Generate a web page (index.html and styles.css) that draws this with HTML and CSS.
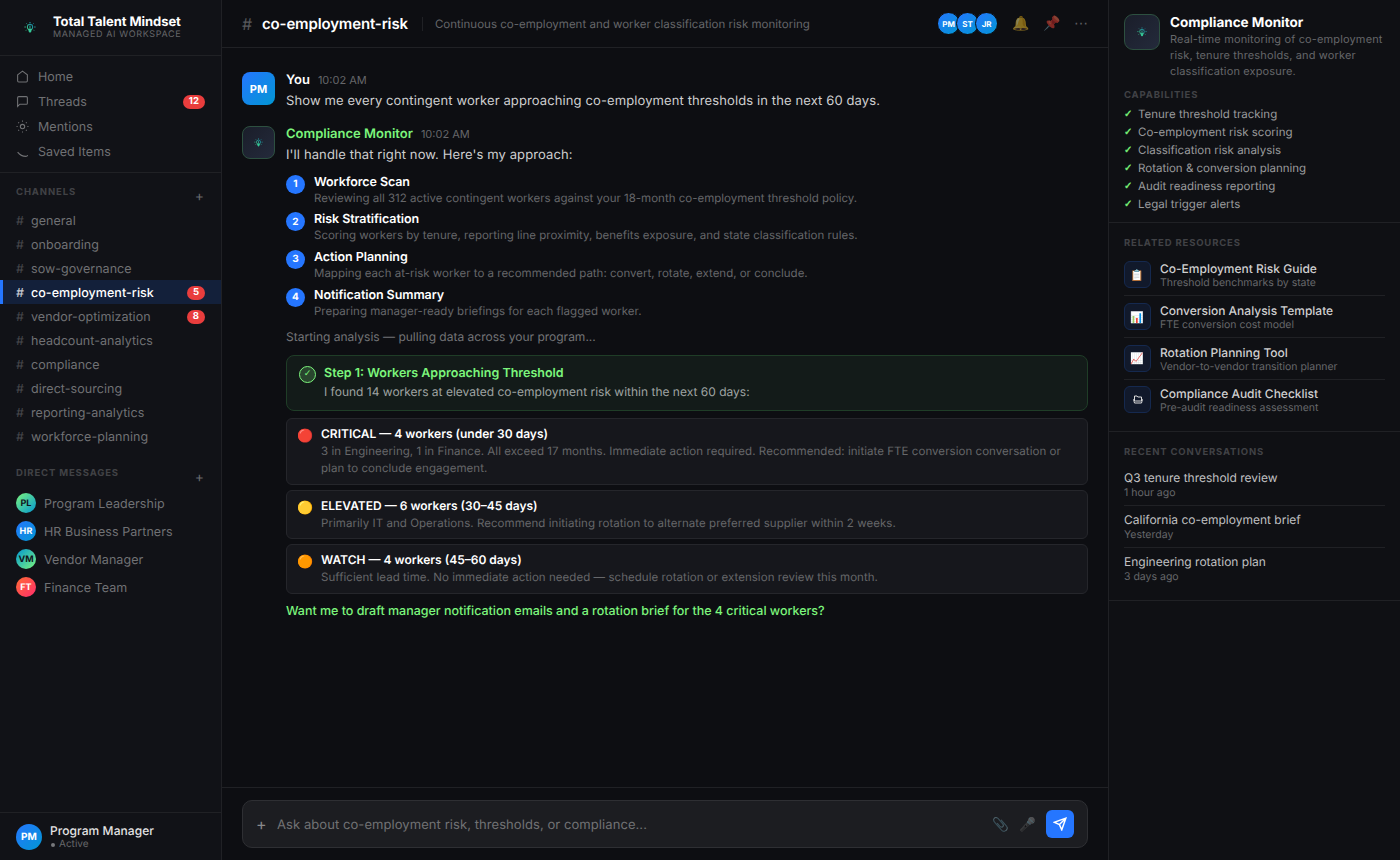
FILE: index.html
```html
<!DOCTYPE html>
<html lang="en">

<head>
    <meta charset="UTF-8">
    <meta name="viewport" content="width=device-width, initial-scale=1.0">
    <title>Total Talent Mindset</title>
    <link rel="stylesheet" href="styles.css">
</head>

<body>
    <svg width="0" height="0" class="defs">
        <defs>
            <linearGradient id="bulbGrad" x1="0" y1="1" x2="1" y2="0">
                <stop offset="0" stop-color="#3fd48a" />
                <stop offset="1" stop-color="#1591b4" />
            </linearGradient>
            <symbol id="bulb" viewBox="0 0 24 24">
                <g fill="none" stroke="url(#bulbGrad)" stroke-width="2">
                    <circle cx="12" cy="11" r="5.5" />
                    <path d="M12 1v2.5M5 4l1.5 1.5M19 4l-1.5 1.5M1 11h2.500M20.500 11H23M4 18l1.500-1.500M20 18l-1.500-1.500M12 8v7" />
                </g>
                <path d="M8 15h8l-1.500 5-2.500 3-2.500-3z" fill="#35c797" />
            </symbol>
        </defs>
    </svg>

    <div class="app">
        <aside class="sidebar">
            <div class="brand">
                <div class="brand-logo"><svg width="12" height="13"><use href="#bulb" /></svg></div>
                <div>
                    <div class="brand-name">Total Talent Mindset</div>
                    <div class="brand-sub">MANAGED AI WORKSPACE</div>
                </div>
            </div>

            <nav class="nav">
                <div class="nav-item">
                    <svg class="nav-icon" viewBox="0 0 24 24"><path d="M3 9l9-7 9 7v11a2 2 0 0 1-2 2H5a2 2 0 0 1-2-2z" /></svg>
                    <span>Home</span>
                </div>
                <div class="nav-item">
                    <svg class="nav-icon" viewBox="0 0 24 24"><path d="M21 15a2 2 0 0 1-2 2H7l-4 4V5a2 2 0 0 1 2-2h14a2 2 0 0 1 2 2z" /></svg>
                    <span>Threads</span>
                    <span class="badge">12</span>
                </div>
                <div class="nav-item">
                    <svg class="nav-icon" viewBox="0 0 24 24"><circle cx="12" cy="12" r="4" /><path d="M12 1v2M12 21v2M1 12h2M21 12h2M4.200 4.200l1.500 1.500M18.300 18.300l1.500 1.500M4.200 19.800l1.500-1.500M18.300 5.700l1.500-1.500" /></svg>
                    <span>Mentions</span>
                </div>
                <div class="nav-item">
                    <svg class="nav-icon" viewBox="0 0 24 24"><path d="M3 13c4 5 10 8 15 8 2 0 3-.5 3.500-2.500" /></svg>
                    <span>Saved Items</span>
                </div>
            </nav>

            <div class="section-head">
                <span>CHANNELS</span>
                <span class="add">+</span>
            </div>
            <div class="channels">
                <div class="channel"><span class="hash">#</span>general</div>
                <div class="channel"><span class="hash">#</span>onboarding</div>
                <div class="channel"><span class="hash">#</span>sow-governance</div>
                <div class="channel active"><span class="hash">#</span>co-employment-risk<span class="badge">5</span></div>
                <div class="channel"><span class="hash">#</span>vendor-optimization<span class="badge">8</span></div>
                <div class="channel"><span class="hash">#</span>headcount-analytics</div>
                <div class="channel"><span class="hash">#</span>compliance</div>
                <div class="channel"><span class="hash">#</span>direct-sourcing</div>
                <div class="channel"><span class="hash">#</span>reporting-analytics</div>
                <div class="channel"><span class="hash">#</span>workforce-planning</div>
            </div>

            <div class="section-head dm-head">
                <span>DIRECT MESSAGES</span>
                <span class="add">+</span>
            </div>
            <div class="dms">
                <div class="dm"><span class="dm-avatar green">PL</span>Program Leadership</div>
                <div class="dm"><span class="dm-avatar blue">HR</span>HR Business Partners</div>
                <div class="dm"><span class="dm-avatar teal">VM</span>Vendor Manager</div>
                <div class="dm"><span class="dm-avatar red">FT</span>Finance Team</div>
            </div>

            <div class="user">
                <div class="user-avatar">PM</div>
                <div>
                    <div class="user-name">Program Manager</div>
                    <div class="user-status"><span class="status-dot"></span>Active</div>
                </div>
            </div>
        </aside>

        <main class="main">
            <header class="topbar">
                <span class="topbar-hash">#</span>
                <h1 class="topbar-title">co-employment-risk</h1>
                <span class="topbar-desc">Continuous co-employment and worker classification risk monitoring</span>
                <div class="members">
                    <span class="member">PM</span>
                    <span class="member">ST</span>
                    <span class="member">JR</span>
                </div>
                <div class="actions">
                    <span>🔔</span>
                    <span>📌</span>
                    <span class="more">⋯</span>
                </div>
            </header>

            <div class="messages">
                <div class="message">
                    <div class="avatar user-bg">PM</div>
                    <div class="message-body">
                        <div class="message-head"><span class="author">You</span><span class="time">10:02 AM</span></div>
                        <div class="message-text">Show me every contingent worker approaching co-employment thresholds in the next 60 days.</div>
                    </div>
                </div>

                <div class="message">
                    <div class="avatar bot-bg"><svg width="9" height="9"><use href="#bulb" /></svg></div>
                    <div class="message-body">
                        <div class="message-head"><span class="author bot">Compliance Monitor</span><span class="time">10:02 AM</span></div>
                        <div class="message-text">I'll handle that right now. Here's my approach:</div>

                        <div class="steps">
                            <div class="step">
                                <span class="step-num">1</span>
                                <div>
                                    <div class="step-title">Workforce Scan</div>
                                    <div class="step-desc">Reviewing all 312 active contingent workers against your 18-month co-employment threshold policy.</div>
                                </div>
                            </div>
                            <div class="step">
                                <span class="step-num">2</span>
                                <div>
                                    <div class="step-title">Risk Stratification</div>
                                    <div class="step-desc">Scoring workers by tenure, reporting line proximity, benefits exposure, and state classification rules.</div>
                                </div>
                            </div>
                            <div class="step">
                                <span class="step-num">3</span>
                                <div>
                                    <div class="step-title">Action Planning</div>
                                    <div class="step-desc">Mapping each at-risk worker to a recommended path: convert, rotate, extend, or conclude.</div>
                                </div>
                            </div>
                            <div class="step">
                                <span class="step-num">4</span>
                                <div>
                                    <div class="step-title">Notification Summary</div>
                                    <div class="step-desc">Preparing manager-ready briefings for each flagged worker.</div>
                                </div>
                            </div>
                        </div>

                        <div class="starting">Starting analysis — pulling data across your program...</div>

                        <div class="result">
                            <span class="result-check">✓</span>
                            <div>
                                <div class="result-title">Step 1: Workers Approaching Threshold</div>
                                <div class="result-text">I found 14 workers at elevated co-employment risk within the next 60 days:</div>
                            </div>
                        </div>

                        <div class="risk">
                            <span class="risk-dot">🔴</span>
                            <div>
                                <div class="risk-title">CRITICAL — 4 workers (under 30 days)</div>
                                <div class="risk-text">3 in Engineering, 1 in Finance. All exceed 17 months. Immediate action required. Recommended: initiate FTE conversion conversation or plan to conclude engagement.</div>
                            </div>
                        </div>
                        <div class="risk">
                            <span class="risk-dot">🟡</span>
                            <div>
                                <div class="risk-title">ELEVATED — 6 workers (30–45 days)</div>
                                <div class="risk-text">Primarily IT and Operations. Recommend initiating rotation to alternate preferred supplier within 2 weeks.</div>
                            </div>
                        </div>
                        <div class="risk">
                            <span class="risk-dot">🟠</span>
                            <div>
                                <div class="risk-title">WATCH — 4 workers (45–60 days)</div>
                                <div class="risk-text">Sufficient lead time. No immediate action needed — schedule rotation or extension review this month.</div>
                            </div>
                        </div>

                        <div class="followup">Want me to draft manager notification emails and a rotation brief for the 4 critical workers?</div>
                    </div>
                </div>
            </div>

            <div class="composer">
                <div class="composer-box">
                    <span class="composer-add">+</span>
                    <input class="composer-input" type="text" placeholder="Ask about co-employment risk, thresholds, or compliance...">
                    <span class="composer-icon">📎</span>
                    <span class="composer-icon">🎤</span>
                    <button class="send">
                        <svg width="14" height="14" viewBox="0 0 24 24"><path d="M22 2L11 13M22 2l-7 20-4-9-9-4z" /></svg>
                    </button>
                </div>
            </div>
        </main>

        <aside class="panel">
            <section class="panel-section about">
                <div class="agent">
                    <div class="agent-avatar"><svg width="10" height="10"><use href="#bulb" /></svg></div>
                    <div>
                        <div class="agent-name">Compliance Monitor</div>
                        <div class="agent-desc">Real-time monitoring of co-employment risk, tenure thresholds, and worker classification exposure.</div>
                    </div>
                </div>
                <div class="panel-label">CAPABILITIES</div>
                <ul class="caps">
                    <li>Tenure threshold tracking</li>
                    <li>Co-employment risk scoring</li>
                    <li>Classification risk analysis</li>
                    <li>Rotation &amp; conversion planning</li>
                    <li>Audit readiness reporting</li>
                    <li>Legal trigger alerts</li>
                </ul>
            </section>

            <section class="panel-section related">
                <div class="panel-label">RELATED RESOURCES</div>
                <div class="resource">
                    <span class="resource-icon">📋</span>
                    <div class="resource-info">
                        <div class="resource-title">Co-Employment Risk Guide</div>
                        <div class="resource-sub">Threshold benchmarks by state</div>
                    </div>
                </div>
                <div class="resource">
                    <span class="resource-icon">📊</span>
                    <div class="resource-info">
                        <div class="resource-title">Conversion Analysis Template</div>
                        <div class="resource-sub">FTE conversion cost model</div>
                    </div>
                </div>
                <div class="resource">
                    <span class="resource-icon">📈</span>
                    <div class="resource-info">
                        <div class="resource-title">Rotation Planning Tool</div>
                        <div class="resource-sub">Vendor-to-vendor transition planner</div>
                    </div>
                </div>
                <div class="resource">
                    <span class="resource-icon">
                        <svg width="10" height="9" viewBox="0 0 10 9"><path d="M1.500 6V1h2.500l.8 1h3.700v4M.6 4.500L1.500 8h7l.9-3.500-1.900 1.500h-5z" /></svg>
                    </span>
                    <div class="resource-info">
                        <div class="resource-title">Compliance Audit Checklist</div>
                        <div class="resource-sub">Pre-audit readiness assessment</div>
                    </div>
                </div>
            </section>

            <section class="panel-section recent">
                <div class="panel-label">RECENT CONVERSATIONS</div>
                <div class="convo">
                    <div class="convo-title">Q3 tenure threshold review</div>
                    <div class="convo-time">1 hour ago</div>
                </div>
                <div class="convo">
                    <div class="convo-title">California co-employment brief</div>
                    <div class="convo-time">Yesterday</div>
                </div>
                <div class="convo">
                    <div class="convo-title">Engineering rotation plan</div>
                    <div class="convo-time">3 days ago</div>
                </div>
            </section>
        </aside>
    </div>
</body>

</html>
```
FILE: styles.css
```css
* {
    box-sizing: border-box;
    margin: 0;
    padding: 0;
}

body {
    font-family: Inter, 'Liberation Sans', sans-serif;
    text-rendering: geometricPrecision;
    background: #0d0e12;
    color: #fff;
    height: 100vh;
    overflow: hidden;
}

.defs {
    position: absolute;
}

.app {
    display: flex;
    height: 100vh;
}

/* Sidebar */
.sidebar {
    width: 222px;
    flex-shrink: 0;
    background: #111217;
    border-right: 1px solid #202125;
    display: flex;
    flex-direction: column;
}

.brand {
    height: 56px;
    padding: 0 16px;
    display: flex;
    align-items: center;
    gap: 9px;
    border-bottom: 1px solid #202125;
}

.brand-logo {
    width: 28px;
    height: 28px;
    display: flex;
    align-items: center;
    justify-content: center;
}

.brand-name {
    height: 15px;
    font-size: 13px;
    font-weight: 700;
    line-height: 17px;
    letter-spacing: -0.05px;
}

.brand-sub {
    font-size: 9px;
    line-height: 12px;
    letter-spacing: 0.63px;
    color: #66676a;
}

.nav {
    padding: 8px 0;
    border-bottom: 1px solid #202125;
}

.nav-item {
    height: 25px;
    padding: 2px 16px 0;
    display: flex;
    align-items: center;
    gap: 9px;
    font-size: 12.5px;
    letter-spacing: 0.03px;
    color: #707174;
}

.nav-icon {
    width: 13px;
    height: 13px;
    margin-top: -2px;
    fill: none;
    stroke: currentColor;
    stroke-width: 2;
}

.badge {
    margin-left: auto;
    margin-top: -1px;
    background: #e93d3d;
    color: #fff;
    font-size: 9.5px;
    font-weight: 700;
    line-height: 14px;
    padding: 0 6px;
    border-radius: 8px;
}

.section-head {
    height: 36px;
    padding: 13px 16px 0;
    display: flex;
    justify-content: space-between;
    font-size: 9.5px;
    font-weight: 700;
    line-height: 13px;
    letter-spacing: 0.87px;
    color: #414246;
}

.add {
    font-size: 14px;
    font-weight: 400;
    line-height: 22px;
    color: #66676a;
}

.channels {
    margin-top: -1px;
}

.channel {
    height: 24px;
    padding: 3px 16px 0 13px;
    border-left: 3px solid transparent;
    display: flex;
    align-items: center;
    font-size: 12.5px;
    letter-spacing: 0.05px;
    color: #707174;
}

.channel .badge {
    margin-top: -2px;
}

.hash {
    width: 15px;
    color: #48494d;
}

.channel.active {
    background: #13203a;
    border-left-color: #2576ff;
    color: #fff;
    font-weight: 500;
}

.channel.active .hash {
    color: #c5c9d1;
}

.dm-head {
    height: 41px;
    padding-top: 19px;
}

.dm {
    height: 28px;
    padding: 3px 16px 0;
    display: flex;
    align-items: center;
    gap: 8px;
    font-size: 12.5px;
    letter-spacing: 0.06px;
    color: #707174;
}

.dm-avatar {
    width: 20px;
    height: 20px;
    margin-top: -3px;
    border-radius: 50%;
    display: flex;
    align-items: center;
    justify-content: center;
    font-size: 9px;
    font-weight: 700;
}

.dm-avatar.green {
    background: linear-gradient(135deg, #7cf57c, #0197d3);
    color: #10151c;
}

.dm-avatar.blue {
    background: linear-gradient(135deg, #2576ff, #0197d3);
    color: #fff;
}

.dm-avatar.teal {
    background: linear-gradient(135deg, #0197d3, #7cf57c);
    color: #10151c;
}

.dm-avatar.red {
    background: linear-gradient(135deg, #ff6b35, #ff2d6b);
    color: #fff;
}

.user {
    margin-top: auto;
    height: 48px;
    padding: 0 16px;
    border-top: 1px solid #202125;
    display: flex;
    align-items: center;
    gap: 8px;
}

.user-avatar {
    width: 26px;
    height: 26px;
    border-radius: 50%;
    background: linear-gradient(135deg, #2576ff, #0197d3);
    display: flex;
    align-items: center;
    justify-content: center;
    font-size: 10px;
    font-weight: 700;
}

.user-name {
    font-size: 12px;
    font-weight: 500;
    line-height: 15px;
    letter-spacing: 0.07px;
    color: #e4e4e5;
}

.user-status {
    display: flex;
    align-items: center;
    font-size: 10px;
    line-height: 13px;
    color: #66676a;
}

.status-dot {
    width: 4px;
    height: 4px;
    margin: 1px 4px 0 1px;
    border-radius: 50%;
    background: #77787b;
}

/* Main column */
.main {
    flex: 1;
    min-width: 0;
    display: flex;
    flex-direction: column;
}

.topbar {
    height: 48px;
    flex-shrink: 0;
    padding: 0 20px;
    border-bottom: 1px solid #202125;
    display: flex;
    align-items: center;
}

.topbar-hash {
    width: 20px;
    font-size: 16px;
    color: #58595c;
}

.topbar-title {
    font-size: 15px;
    font-weight: 600;
    letter-spacing: -0.15px;
}

.topbar-desc {
    margin-left: 14px;
    padding-left: 12px;
    border-left: 1px solid #202125;
    font-size: 11.5px;
    letter-spacing: 0.01px;
    color: #66676a;
}

.members {
    margin-left: auto;
    display: flex;
}

.member {
    width: 23px;
    height: 23px;
    margin-left: -4px;
    border: 1px solid #0d0e12;
    border-radius: 50%;
    background: linear-gradient(135deg, #2576ff, #0197d3);
    display: flex;
    align-items: center;
    justify-content: center;
    font-size: 8px;
    font-weight: 700;
}

.actions {
    margin-left: 14px;
    display: flex;
    gap: 14px;
    font-size: 14px;
    line-height: 18px;
    color: #b0b0b2;
}

.actions span {
    opacity: 0.5;
}

.actions .more {
    width: 14px;
    margin-left: -1px;
}

.messages {
    flex: 1;
    padding: 24px 20px 0;
}

.message {
    display: flex;
    gap: 11px;
    margin-bottom: 16px;
}

.avatar {
    width: 33px;
    height: 33px;
    flex-shrink: 0;
    border-radius: 8px;
    display: flex;
    align-items: center;
    justify-content: center;
    font-size: 11px;
    font-weight: 700;
}

.user-bg {
    background: linear-gradient(135deg, #2576ff, #0197d3);
}

.bot-bg {
    background: linear-gradient(135deg, #1a1e2a, #242a3b);
    border: 1px solid #2d5040;
}

.message-body {
    flex: 1;
    min-width: 0;
}

.message-head {
    height: 18px;
    display: flex;
    align-items: baseline;
    gap: 8px;
    line-height: 17px;
}

.author {
    font-size: 13px;
    font-weight: 600;
}

.author.bot {
    color: #7cf57c;
}

.time {
    font-size: 11px;
    color: #66676a;
}

.message-text {
    height: 20px;
    font-size: 13px;
    line-height: 22px;
    letter-spacing: 0.11px;
    color: #cfcfd0;
}

.steps {
    padding-top: 9.6px;
}

.step {
    display: flex;
    gap: 9px;
    height: 37.7px;
}

.step-num {
    width: 19px;
    height: 19px;
    margin-top: 1px;
    flex-shrink: 0;
    border-radius: 50%;
    background: #2576ff;
    display: flex;
    align-items: center;
    justify-content: center;
    font-size: 10px;
    font-weight: 700;
}

.step-title {
    height: 16px;
    font-size: 12.5px;
    font-weight: 600;
    line-height: 18px;
    letter-spacing: -0.08px;
}

.step-desc {
    font-size: 11.5px;
    line-height: 17px;
    color: #66676a;
}

.starting {
    margin-top: 3.4px;
    font-size: 12px;
    line-height: 18px;
    color: #737477;
}

.result {
    margin-top: 9px;
    height: 56px;
    padding: 8px 12px;
    border: 1px solid #1f3d27;
    border-radius: 8px;
    background: #131b19;
    display: flex;
    gap: 8px;
}

.result-check {
    width: 17px;
    height: 17px;
    margin-top: 2px;
    flex-shrink: 0;
    border: 1px solid #7cf57c;
    border-radius: 50%;
    background: #29462e;
    display: flex;
    align-items: center;
    justify-content: center;
    font-family: 'DejaVu Sans', sans-serif;
    font-size: 9px;
    line-height: 17px;
    color: #7cf57c;
}

.result-title {
    font-size: 12.5px;
    font-weight: 600;
    line-height: 19px;
    color: #7cf57c;
}

.result-text {
    font-size: 12px;
    line-height: 18px;
    color: #9fa3a2;
}

.risk {
    margin-top: 5px;
    padding: 6px 10px;
    border: 1px solid #25262b;
    border-radius: 6px;
    background: #16171c;
    display: flex;
    gap: 8px;
}

.result + .risk {
    margin-top: 7.3px;
}

.risk:nth-last-child(2) {
    padding-bottom: 6.7px;
}

.risk-dot {
    width: 16px;
    flex-shrink: 0;
    font-size: 13px;
    line-height: 22px;
}

.risk-title {
    font-size: 12px;
    font-weight: 600;
    line-height: 18px;
}

.risk-text {
    font-size: 11.5px;
    line-height: 17.25px;
    letter-spacing: 0.05px;
    color: #66676a;
}

.followup {
    margin-top: 8.3px;
    font-size: 12.5px;
    font-weight: 500;
    line-height: 20px;
    letter-spacing: -0.02px;
    color: #7cf57c;
}

.composer {
    height: 73px;
    padding: 12px 20px;
    border-top: 1px solid #202125;
}

.composer-box {
    height: 48px;
    padding: 0 13px;
    border: 1px solid #2e2f33;
    border-radius: 10px;
    background: #1c1d21;
    display: flex;
    align-items: center;
}

.composer-add {
    width: 21px;
    font-size: 16px;
    color: #88898b;
}

.composer-input {
    flex: 1;
    padding-top: 1px;
    border: none;
    outline: none;
    background: none;
    font-family: inherit;
    text-rendering: inherit;
    font-size: 13px;
    letter-spacing: 0.07px;
    color: #fff;
}

.composer-input::placeholder {
    color: #717274;
}

.composer-icon {
    padding-top: 1px;
    margin-right: 10px;
    font-size: 13.5px;
    opacity: 0.4;
}

.send {
    width: 28px;
    height: 28px;
    border: none;
    border-radius: 6px;
    background: #2576ff;
    display: flex;
    align-items: center;
    justify-content: center;
}

.send svg {
    fill: none;
    stroke: #fff;
    stroke-width: 2.5;
}

/* Right panel */
.panel {
    width: 292px;
    flex-shrink: 0;
    background: #0f1014;
    border-left: 1px solid #202125;
}

.panel-section {
    padding: 14px 15px 0;
    border-bottom: 1px solid #202125;
}

.about {
    height: 223px;
}

.related {
    height: 209px;
}

.recent {
    height: 169px;
}

.agent {
    display: flex;
    gap: 10px;
    margin-bottom: 10px;
}

.agent-avatar {
    width: 36px;
    height: 36px;
    flex-shrink: 0;
    border: 1px solid #2d5040;
    border-radius: 9px;
    background: linear-gradient(135deg, #1a1e2a, #242a3b);
    display: flex;
    align-items: center;
    justify-content: center;
}

.agent-name {
    height: 17px;
    font-size: 13.5px;
    font-weight: 700;
    line-height: 19px;
}

.agent-desc {
    font-size: 11px;
    line-height: 16px;
    letter-spacing: 0.14px;
    color: #66676a;
}

.panel-label {
    font-size: 9.5px;
    font-weight: 700;
    line-height: 13px;
    letter-spacing: 0.83px;
    color: #414246;
}

.caps {
    list-style: none;
    margin-top: 3px;
    font-size: 11.5px;
    line-height: 18px;
    color: #9a9b9d;
}

.caps li {
    display: flex;
}

.caps li::before {
    content: '✓';
    width: 14px;
    font-family: 'DejaVu Sans', sans-serif;
    font-size: 10px;
    font-weight: 700;
    line-height: 19px;
    height: 18px;
    color: #7cf57c;
    -webkit-text-stroke: 0.4px #7cf57c;
}

.related .panel-label {
    margin-bottom: 4.6px;
}

.resource {
    height: 41.65px;
    padding-top: 6.9px;
    display: flex;
    align-items: flex-start;
    gap: 9px;
    border-bottom: 1px solid #202125;
}

.resource:last-child,
.convo:last-child {
    border-bottom: none;
}

.resource-icon {
    width: 27px;
    height: 27px;
    flex-shrink: 0;
    border: 1px solid #15294f;
    border-radius: 6px;
    background: #11192b;
    display: flex;
    align-items: center;
    justify-content: center;
    font-size: 11px;
}

.resource-icon svg {
    fill: none;
    stroke: #dcdcdc;
}

.resource-info {
    padding-top: 0.8px;
}

.resource-title {
    font-size: 12px;
    font-weight: 500;
    line-height: 14px;
    color: #cfcfd0;
}

.resource-sub {
    font-size: 10.5px;
    line-height: 14px;
    letter-spacing: -0.03px;
    color: #66676a;
}

.recent .panel-label {
    margin-bottom: 5px;
}

.convo {
    height: 42px;
    padding-top: 6px;
    border-bottom: 1px solid #202125;
}

.convo-title {
    font-size: 12px;
    line-height: 15px;
    color: #c0c0c2;
}

.convo-time {
    margin-top: 1px;
    font-size: 10.5px;
    line-height: 14px;
    color: #66676a;
}
```
